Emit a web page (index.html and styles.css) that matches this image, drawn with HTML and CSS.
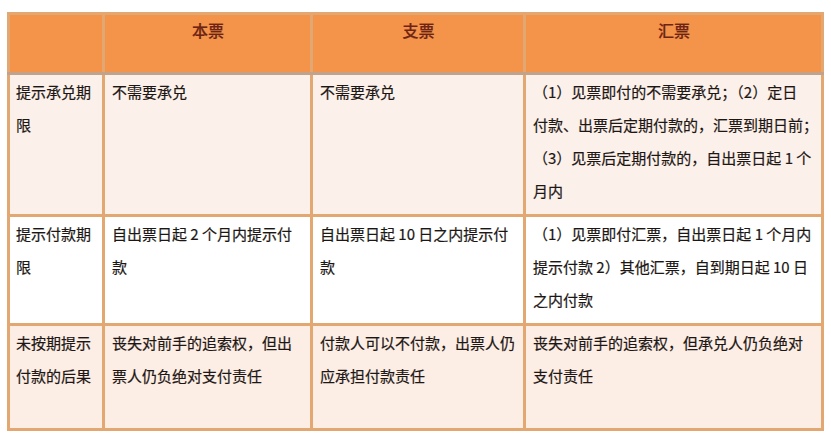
FILE: index.html
```html
<!DOCTYPE html>
<html lang="zh-CN">
<head>
<meta charset="utf-8">
<link rel="stylesheet" href="styles.css">
</head>
<body>
<table class="bill">
  <colgroup>
    <col class="c1"><col class="c2"><col class="c3"><col class="c4">
  </colgroup>
  <thead>
    <tr class="head">
      <th></th>
      <th>本票</th>
      <th>支票</th>
      <th>汇票</th>
    </tr>
  </thead>
  <tbody>
    <tr class="r1">
      <td>提示承兑期限</td>
      <td>不需要承兑</td>
      <td>不需要承兑</td>
      <td class="wide">（1）见票即付的不需要承兑；（2）定日<br>付款、出票后定期付款的，汇票到期日前；<br>（3）见票后定期付款的，自出票日起 1 个月内</td>
    </tr>
    <tr class="r2">
      <td>提示付款期限</td>
      <td>自出票日起 2 个月内提示付款</td>
      <td>自出票日起 10 日之内提示付款</td>
      <td>（1）见票即付汇票，自出票日起 1 个月内提示付款 2）其他汇票，自到期日起 10 日之内付款</td>
    </tr>
    <tr class="r3">
      <td>未按期提示付款的后果</td>
      <td>丧失对前手的追索权，但出票人仍负绝对支付责任</td>
      <td>付款人可以不付款，出票人仍应承担付款责任</td>
      <td>丧失对前手的追索权，但承兑人仍负绝对支付责任</td>
    </tr>
  </tbody>
</table>
</body>
</html>
```

FILE: styles.css
```css
html, body {
  margin: 0;
  padding: 0;
  background: #ffffff;
}
body {
  padding: 12px 0 0 7px;
  font-family: "Noto Sans CJK SC", "Noto Sans", sans-serif;
  color: #1c1714;
}
.bill {
  border-collapse: collapse;
  table-layout: fixed;
  width: 814px;
  border: 3px solid #d9a274;
}
.c1 { width: 95px; }
.c2 { width: 208px; }
.c3 { width: 213px; }
.c4 { width: 298px; }
.bill th, .bill td {
  border: 3px solid #e3a772;
  vertical-align: top;
  text-align: left;
  font-size: 15px;
  line-height: 33px;
  padding: 0 6px 0 7px;
  word-break: break-all;
  -webkit-text-stroke: 0.2px #1c1714;
}
.head th {
  background: #f4934a;
  color: #6e2414;
  -webkit-text-stroke: 0.2px #6e2414;
  text-align: center;
  font-size: 16px;
  font-weight: 500;
  height: 57px;
  padding-top: 0;
  line-height: 30px;
  border-bottom-color: #c3a28b;
}
.bill td.wide { padding-right: 0; }
.r1 td { background: #fcf0ea; height: 139px; }
.r2 td { background: #ffffff; height: 106px; }
.r3 td { background: #fcede5; height: 102px; }
.bill td:first-child { padding-left: 6px; padding-right: 4px; }
```
